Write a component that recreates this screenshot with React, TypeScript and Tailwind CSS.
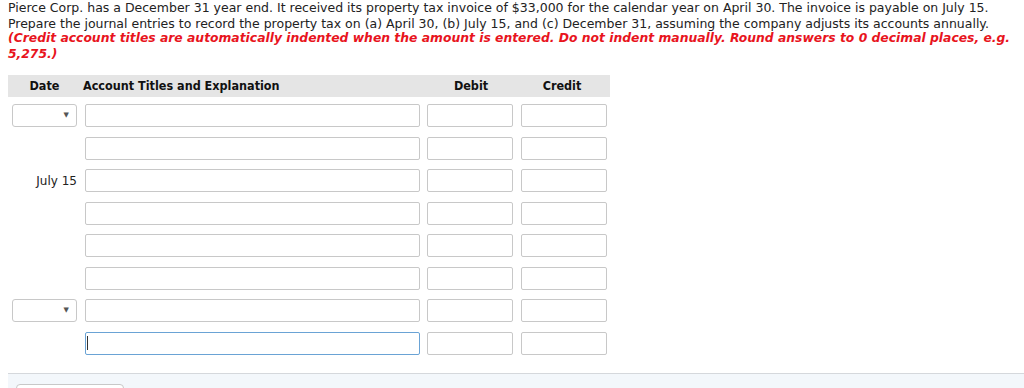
import React from "react";

const rows = [
  { date: "select" },
  { date: "" },
  { date: "July 15" },
  { date: "" },
  { date: "" },
  { date: "" },
  { date: "select" },
  { date: "", focus: true },
];

function DateSelect() {
  return (
    <div className="w-[65px] h-[23px] border border-[#c8c8c8] rounded-[3px] bg-white flex items-center justify-end pr-[7px]">
      <span className="text-[7px] text-[#555] leading-none">▼</span>
    </div>
  );
}

function Box({ w, focus }: { w: string; focus?: boolean }) {
  return (
    <div
      className={`${w} h-[23px] rounded-[2px] bg-white border flex items-center ${
        focus ? "border-[#6aa3d5]" : "border-[#c8c8c8]"
      }`}
    >
      {focus && <span className="ml-[1px] w-px h-[14px] bg-[#333]" />}
    </div>
  );
}

export default function App() {
  return (
    <div className="w-[1024px] h-[388px] overflow-hidden bg-white font-['DejaVu_Sans',Verdana,sans-serif] text-[#222]">
      <div className="pl-[8px] text-[12.5px] leading-[15.5px]">
        <p>Pierce Corp. has a December 31 year end. It received its property tax invoice of $33,000 for the calendar year on April 30. The invoice is payable on July 15.</p>
        <p>Prepare the journal entries to record the property tax on (a) April 30, (b) July 15, and (c) December 31, assuming the company adjusts its accounts annually.</p>
        <p className="text-[#e8141d] font-bold italic text-[12.35px]">
          (Credit account titles are automatically indented when the amount is entered. Do not indent manually. Round answers to 0 decimal places, e.g. 5,275.)
        </p>
      </div>

      <div className="ml-[8px] mt-[13px] w-[602px]">
        <div className="h-[22px] bg-[#e5e5e5] flex items-center text-[12.5px] font-bold text-[#111] font-['DejaVu_Sans_Condensed','DejaVu_Sans',sans-serif]">
          <div className="w-[73px] text-center">Date</div>
          <div className="w-[347px] pl-[2px]">Account Titles and Explanation</div>
          <div className="w-[86px] text-center">Debit</div>
          <div className="w-[96px] text-center">Credit</div>
        </div>

        <div className="pt-[7px] flex flex-col gap-[9.5px]">
          {rows.map((r, i) => (
            <div key={i} className="flex items-center h-[23px]">
              <div className="w-[77px] flex justify-end pr-[8px]">
                {r.date === "select" ? (
                  <DateSelect />
                ) : (
                  <span className="text-[12px]">{r.date}</span>
                )}
              </div>
              <Box w="w-[335px]" focus={r.focus} />
              <div className="w-[7px]" />
              <Box w="w-[86px]" />
              <div className="w-[8px]" />
              <Box w="w-[86px]" />
            </div>
          ))}
        </div>
      </div>

      <div className="ml-[8px] mt-[18px] border-t border-[#d5d8dc] bg-[#f3f7fb] h-[40px] pl-[8px] pt-[6px]">
        <div className="inline-block border border-[#c8c8c8] rounded-[4px] bg-white px-[8px] h-[24px] text-[11px] font-bold text-[#333] leading-[18px]">
          ANALYZE TEXT
        </div>
      </div>
    </div>
  );
}
